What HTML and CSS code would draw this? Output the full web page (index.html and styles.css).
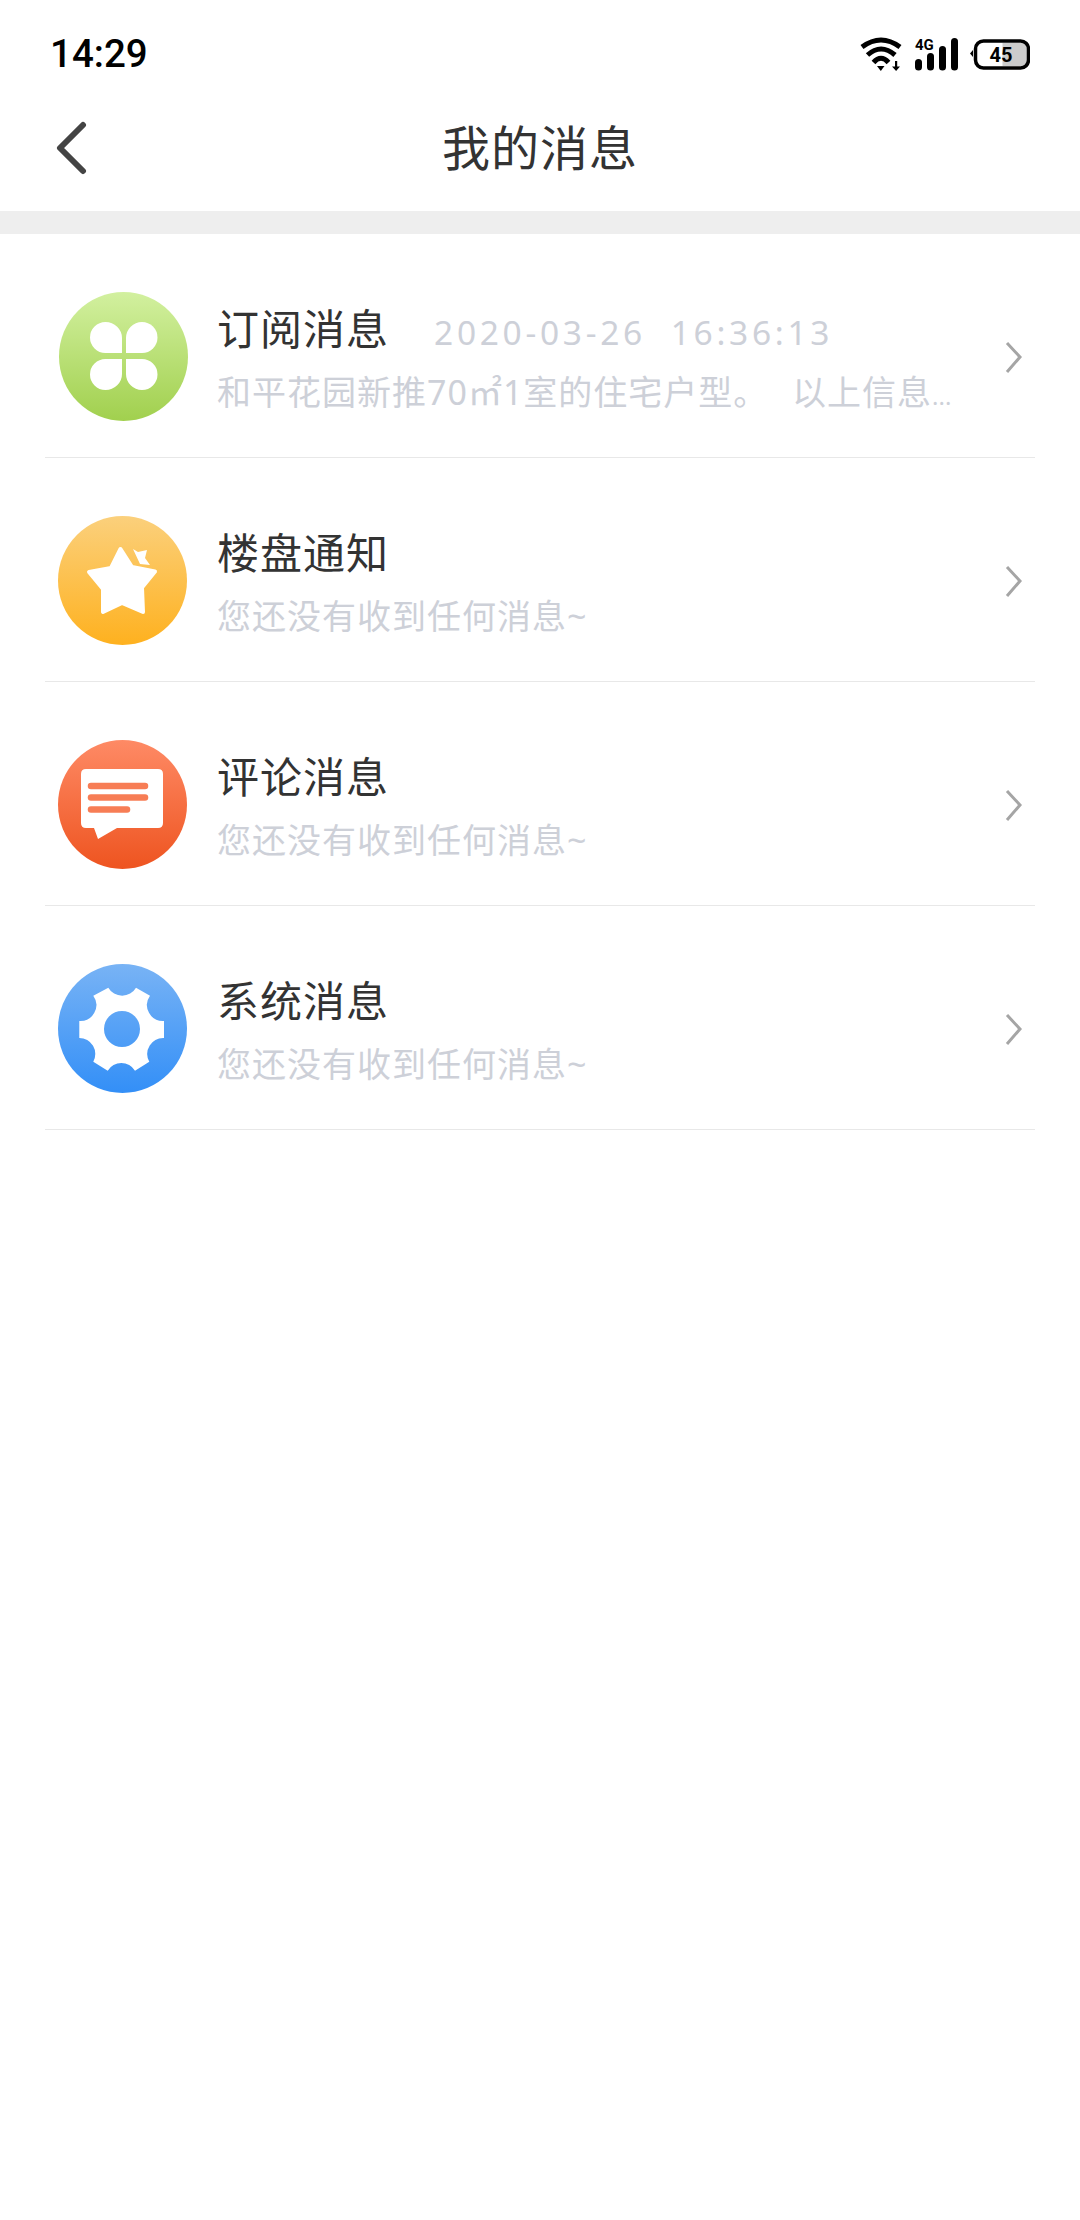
FILE: index.html
```html
<!DOCTYPE html>
<html lang="zh-CN">
  <head>
    <title>我的消息</title>
    <meta name="viewport" content="width=device-width, initial-scale=1">
    <link rel="stylesheet" href="styles.css">
  </head>
  <body>
    <div class="status-bar">
      <span class="clock">14:29</span>
      <svg class="status-icons" width="170" height="40" viewBox="0 0 170 40">
        <g fill="none" stroke="#000" stroke-width="5">
          <path d="M2 12Q21 -2 40 12"/>
          <path d="M7.5 20Q21 8 35 20"/>
          <path d="M13.5 27.5Q21 19 28.5 27.5"/>
        </g>
        <path d="M17 31H24.500L20.800 36Z"/>
        <path d="M35 26H37.200V31.500H40L36.100 36L32 31.500H35Z"/>
        <text class="net-label" x="55" y="15">4G</text>
        <rect x="55" y="24" width="7" height="11.500" rx="3.500"/>
        <rect x="67" y="18" width="7" height="17.500" rx="3.500"/>
        <rect x="79" y="11" width="7" height="24.500" rx="3.500"/>
        <rect x="91" y="3" width="7" height="32.500" rx="3.500"/>
        <path d="M110 18.500L113 15V22Z"/>
        <path d="M142.500 8H163Q167 8 167 12V27Q167 31 163 31H142.500Z" fill="#ccc"/>
        <rect x="115.500" y="6" width="53" height="27" rx="8" fill="none" stroke="#000" stroke-width="3.500"/>
        <text class="battery-label" x="141" y="26.500">45</text>
      </svg>
    </div>

    <div class="nav-bar">
      <svg class="back" width="32" height="54" viewBox="0 0 32 54">
        <path d="M27 4L4 27L27 50" fill="none" stroke="#444" stroke-width="6" stroke-linecap="round" stroke-linejoin="round"/>
      </svg>
      <h1>我的消息</h1>
    </div>

    <div class="band"></div>

    <ul class="msg-list">
      <li class="msg msg-first">
        <svg class="msg-icon" width="129" height="129" viewBox="0 0 129 129">
          <defs>
            <linearGradient id="gradGreen" x1="0" y1="0" x2="0" y2="1">
              <stop offset="0" stop-color="#d2f09f"/>
              <stop offset="1" stop-color="#a1d04e"/>
            </linearGradient>
          </defs>
          <circle cx="64.500" cy="64.500" r="64.500" fill="url(#gradGreen)"/>
          <g fill="#fff">
            <path d="M46.500 30A16.500 16 0 0 1 63 46V61H46.500A15.500 15.500 0 0 1 46.500 30Z"/>
            <path d="M83 30A16 16 0 0 0 67 46V61H83A15.500 15.500 0 0 0 83 30Z"/>
            <path d="M46.500 98A16.500 16 0 0 0 63 82V67H46.500A15.500 15.500 0 0 0 46.500 98Z"/>
            <path d="M83 98A16 16 0 0 1 67 82V67H83A15.500 15.500 0 0 1 83 98Z"/>
          </g>
        </svg>
        <div class="msg-text">
          <div class="msg-head">
            <span class="msg-title">订阅消息</span>
            <span class="msg-date">2020-03-26&nbsp;&nbsp;16:36:13</span>
          </div>
          <div class="msg-sub">和平花园新推70㎡1室的住宅户型。&nbsp;&nbsp;以上信息<span class="msg-more">...</span></div>
        </div>
        <svg class="msg-arrow" width="20" height="34" viewBox="0 0 20 34">
          <path d="M3 3L16 17L3 32" fill="none" stroke="#a5a5a5" stroke-width="3"/>
        </svg>
      </li>

      <li class="msg">
        <svg class="msg-icon" width="129" height="129" viewBox="0 0 129 129">
          <defs>
            <linearGradient id="gradOrange" x1="0" y1="0" x2="0" y2="1">
              <stop offset="0" stop-color="#fbd07c"/>
              <stop offset="1" stop-color="#feb11f"/>
            </linearGradient>
          </defs>
          <circle cx="64.500" cy="64.500" r="64.500" fill="url(#gradOrange)"/>
          <path d="M62.500 33L74 51L97 55.500L84 71.500L85 96L64 87L45 96L45 73L31 56L53 52Z" fill="#fff" stroke="#fff" stroke-width="4" stroke-linejoin="round"/>
          <path d="M75 33L80 36L89 34L87 42L92 49L82 48Z" fill="#fff"/>
        </svg>
        <div class="msg-text">
          <div class="msg-head"><span class="msg-title">楼盘通知</span></div>
          <div class="msg-sub">您还没有收到任何消息~</div>
        </div>
        <svg class="msg-arrow" width="20" height="34" viewBox="0 0 20 34">
          <path d="M3 3L16 17L3 32" fill="none" stroke="#a5a5a5" stroke-width="3"/>
        </svg>
      </li>

      <li class="msg">
        <svg class="msg-icon" width="129" height="129" viewBox="0 0 129 129">
          <defs>
            <linearGradient id="gradRed" x1="0" y1="0" x2="0" y2="1">
              <stop offset="0" stop-color="#fe8a65"/>
              <stop offset="1" stop-color="#ee5420"/>
            </linearGradient>
          </defs>
          <circle cx="64.500" cy="64.500" r="64.500" fill="url(#gradRed)"/>
          <path d="M28 29H100Q105 29 105 34V83Q105 88 100 88H59L40 99L36 88H28Q23 88 23 83V34Q23 29 28 29Z" fill="#fff"/>
          <g fill="none" stroke="#f77d55" stroke-width="6.500" stroke-linecap="round">
            <path d="M33 46H87"/>
            <path d="M33 57.500H87"/>
            <path d="M33 69.500H69"/>
          </g>
        </svg>
        <div class="msg-text">
          <div class="msg-head"><span class="msg-title">评论消息</span></div>
          <div class="msg-sub">您还没有收到任何消息~</div>
        </div>
        <svg class="msg-arrow" width="20" height="34" viewBox="0 0 20 34">
          <path d="M3 3L16 17L3 32" fill="none" stroke="#a5a5a5" stroke-width="3"/>
        </svg>
      </li>

      <li class="msg">
        <svg class="msg-icon" width="129" height="129" viewBox="0 0 129 129">
          <defs>
            <linearGradient id="gradBlue" x1="0" y1="0" x2="0" y2="1">
              <stop offset="0" stop-color="#78b3f5"/>
              <stop offset="1" stop-color="#338ff7"/>
            </linearGradient>
          </defs>
          <circle cx="64.500" cy="64.500" r="64.500" fill="url(#gradBlue)"/>
          <path fill="#fff" fill-rule="evenodd" d="M50.300 23.700A16 16 0 0 0 78 23.700L92 31.700A16 16 0 0 0 106 57V74A16 16 0 0 0 91.300 97.700L77 106.700A16 16 0 0 0 49.700 106.700L35.300 97.700A16 16 0 0 0 21.300 74V57A16 16 0 0 0 35.300 31.700ZM64 47A18 18 0 1 0 64 83A18 18 0 1 0 64 47Z"/>
        </svg>
        <div class="msg-text">
          <div class="msg-head"><span class="msg-title">系统消息</span></div>
          <div class="msg-sub">您还没有收到任何消息~</div>
        </div>
        <svg class="msg-arrow" width="20" height="34" viewBox="0 0 20 34">
          <path d="M3 3L16 17L3 32" fill="none" stroke="#a5a5a5" stroke-width="3"/>
        </svg>
      </li>
    </ul>
  </body>
</html>
```

FILE: styles.css
```css
body {
  margin: 0;
  background-color: #fff;
  color: #333;
  font-family: "Noto Sans", "Noto Sans CJK SC", sans-serif;
}
.status-bar {
  display: flex;
  justify-content: space-between;
  align-items: flex-start;
  box-sizing: border-box;
  height: 84px;
  padding: 35px 50px 0;
}
.clock {
  color: #000;
  font-family: Roboto, sans-serif;
  font-size: 38.5px;
  font-weight: 500;
  line-height: 38px;
}
.net-label {
  font-family: Roboto, sans-serif;
  font-size: 15px;
  font-weight: 700;
}
.battery-label {
  font-family: Roboto, sans-serif;
  font-size: 20px;
  font-weight: 700;
  text-anchor: middle;
}
.nav-bar {
  display: grid;
  grid-template-columns: 1fr auto 1fr;
  align-items: center;
  height: 127px;
}
.nav-bar h1 {
  margin: 0 0 6px;
  grid-column: 2;
  color: #333;
  font-family: "Noto Sans CJK SC", sans-serif;
  font-size: 48px;
  font-weight: 400;
  letter-spacing: 1px;
}
.back {
  grid-column: 1;
  grid-row: 1;
  margin-left: 56px;
}
.band {
  height: 23px;
  background-color: #eee;
}
.msg-list {
  margin: 0 45px;
  padding: 0;
  list-style: none;
}
.msg {
  display: flex;
  align-items: flex-start;
  box-sizing: border-box;
  height: 224px;
  padding: 58px 0 0 13px;
  border-bottom: 1px solid #e8e8e8;
}
.msg-first .msg-icon {
  margin-left: 1px;
  margin-right: -1px;
}
.msg-icon {
  flex: none;
}
.msg-text {
  flex: 1;
  min-width: 0;
  margin: 4px 0 0 30px;
}
.msg-head {
  display: flex;
  align-items: baseline;
  height: 62px;
  margin-bottom: 3px;
}
.msg-title {
  font-family: "Noto Sans CJK SC", sans-serif;
  font-size: 42px;
  letter-spacing: 1px;
  line-height: 62px;
}
.msg-date {
  margin-left: 45px;
  color: #cdd0d8;
  font-size: 33.5px;
  letter-spacing: 3.7px;
}
.msg-sub {
  color: #cdd0d8;
  font-size: 34px;
  letter-spacing: 1px;
  line-height: 62px;
  white-space: nowrap;
  word-spacing: 2px;
}
.msg-more {
  font-size: 24px;
  letter-spacing: 0;
}
.msg-arrow {
  flex: none;
  margin: 48px 11px 0 0;
}
```
